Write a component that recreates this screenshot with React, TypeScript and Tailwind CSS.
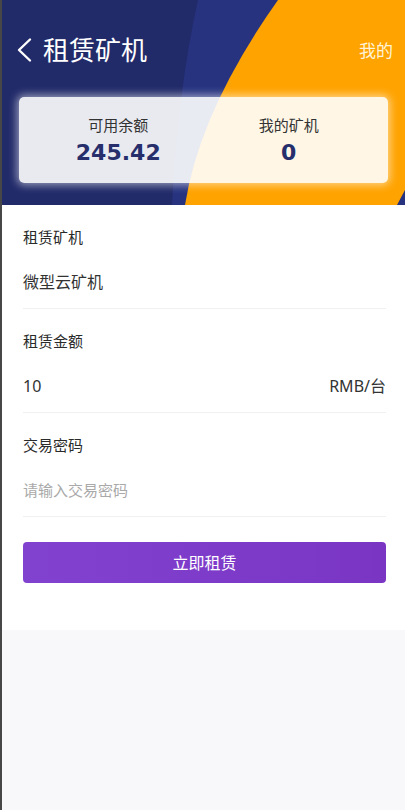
import React from "react";

const font = { fontFamily: "'Noto Sans', 'Noto Sans CJK SC', sans-serif" };

function Field({ label, children }: { label: string; children: React.ReactNode }) {
  return (
    <div className="pt-[22px] pb-[16px] border-b border-[#f0f0f2]">
      <div className="text-[15px] leading-5 text-[#2a2a2a]">{label}</div>
      <div className="mt-[25px] flex items-center justify-between leading-5">{children}</div>
    </div>
  );
}

export default function App() {
  return (
    <div className="min-h-[810px] w-[405px] bg-[#f8f8fa] border-l-2 border-[#474747]" style={font}>
      <div className="relative h-[205px] overflow-hidden">
        <svg
          className="absolute inset-0 h-full w-full"
          viewBox="0 0 403 205"
          preserveAspectRatio="none"
          aria-hidden
        >
          <rect width="403" height="205" fill="#222b6a" />
          <path d="M196,0 Q176,90 170,205 L403,205 L403,0 Z" fill="#27337f" />
          <path d="M276,0 Q198,110 183,205 L395,205 L403,190 L403,0 Z" fill="#ffa300" />
        </svg>
        <div className="relative flex flex-col">
          <div className="mt-[28px] h-[44px] flex items-center justify-between pl-[14px] pr-[12px]">
            <div className="flex items-center">
              <svg width="17" height="26" viewBox="0 0 17 26" fill="none" aria-hidden>
                <path d="M14 2.5 L3 13 L14 23.5" stroke="#ffffff" strokeWidth="2.4" strokeLinecap="round" strokeLinejoin="round" />
              </svg>
              <span className="ml-[10px] text-[26px] leading-none text-white">租赁矿机</span>
            </div>
            <span className="text-[17px] leading-none text-[#fff4d8]">我的</span>
          </div>
          <div className="mt-[25px] ml-[17px] w-[369px] h-[86px] rounded-[5px] bg-white/90 shadow-[0_0_8px_2px_rgba(255,255,255,0.55)] px-[14px] pt-[18px] grid grid-cols-2">
            <div className="flex flex-col items-center">
              <span className="text-[15px] leading-5 text-[#333]">可用余额</span>
              <span
                className="mt-[5px] text-[22px] leading-[26px] font-bold text-[#262f6c]"
                style={{ fontFamily: "'DejaVu Sans', sans-serif" }}
              >
                245.42
              </span>
            </div>
            <div className="flex flex-col items-center">
              <span className="text-[15px] leading-5 text-[#333]">我的矿机</span>
              <span
                className="mt-[5px] text-[22px] leading-[26px] font-bold text-[#262f6c]"
                style={{ fontFamily: "'DejaVu Sans', sans-serif" }}
              >
                0
              </span>
            </div>
          </div>
        </div>
      </div>

      <div className="bg-white pl-[21px] pr-[19px] pb-[47px]">
        <Field label="租赁矿机">
          <span className="text-[16px] text-[#333]">微型云矿机</span>
        </Field>
        <Field label="租赁金额">
          <span className="text-[16px] text-[#333]">10</span>
          <span className="text-[16px] text-[#333]">RMB/台</span>
        </Field>
        <Field label="交易密码">
          <span className="text-[15px] text-[#a9a9a9]">请输入交易密码</span>
        </Field>
        <button className="mt-[25px] w-full h-[41px] rounded-[4px] bg-gradient-to-r from-[#8242d0] to-[#7a35c3] text-white text-[16px] flex items-center justify-center">
          立即租赁
        </button>
      </div>
    </div>
  );
}
